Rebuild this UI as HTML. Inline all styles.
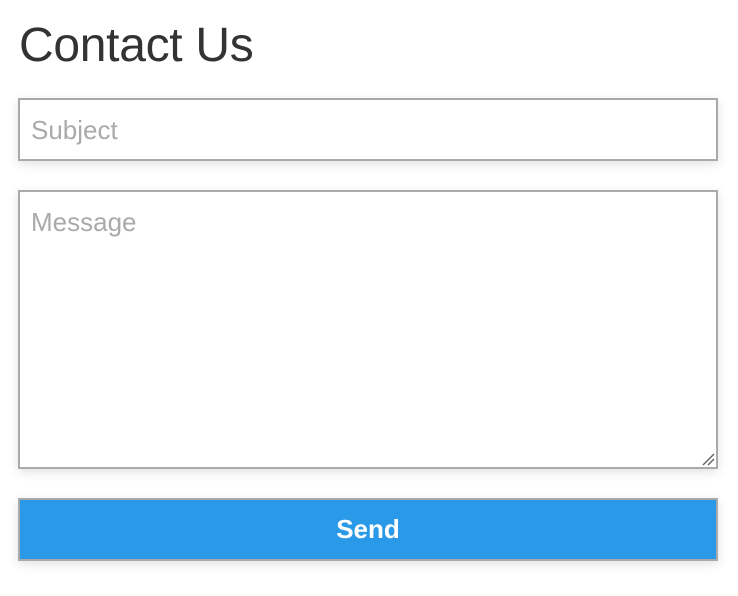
<!DOCTYPE html>
<html><head><style>
body{margin:0;background:#fff;font-family:"Liberation Sans",sans-serif;width:738px;height:596px;position:relative;overflow:hidden}
h1{position:absolute;left:19px;top:16px;margin:0;font-weight:normal;font-size:48px;color:#333;line-height:60px;letter-spacing:-0.3px}
.box{position:absolute;left:18px;width:696px;border:2px solid #aaa;background:#fff;box-shadow:0 3px 10px rgba(0,0,0,0.12)}
.ph{position:absolute;left:11px;color:#aaa;font-size:26px}
.btn{position:absolute;left:18px;top:498px;width:696px;height:59px;border:2px solid #aaa;background:#2a9ae8;color:#fff;font-size:26px;font-weight:bold;text-align:center;line-height:59px;box-shadow:0 3px 10px rgba(0,0,0,0.12)}
</style></head><body>
<h1>Contact Us</h1>
<div class="box" style="top:98px;height:59px"><span class="ph" style="top:15px">Subject</span></div>
<div class="box" style="top:190px;height:275px"><span class="ph" style="top:15px">Message</span>
<svg style="position:absolute;right:1px;bottom:1px" width="14" height="14"><path d="M2 13L13 2M7 13L13 7" stroke="#666" stroke-width="1.5"/></svg></div>
<div class="btn">Send</div>
</body></html>
